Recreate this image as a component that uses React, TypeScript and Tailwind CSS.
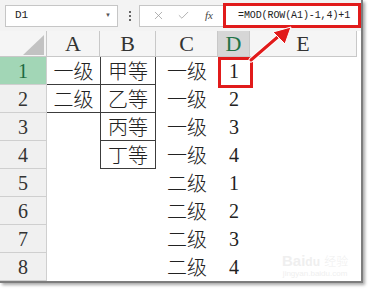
import { X, Check } from 'lucide-react';

type Row = { a?: string; b?: string; c: string; d: string };

const rows: Row[] = [
  { a: '一级', b: '甲等', c: '一级', d: '1' },
  { a: '二级', b: '乙等', c: '一级', d: '2' },
  { b: '丙等', c: '一级', d: '3' },
  { b: '丁等', c: '一级', d: '4' },
  { c: '二级', d: '1' },
  { c: '二级', d: '2' },
  { c: '二级', d: '3' },
  { c: '二级', d: '4' },
];

const serif = "font-['Liberation_Serif','Noto_Sans_CJK_SC',serif]";
const cjk = "font-['Noto_Sans_CJK_SC',sans-serif] font-light";

export default function App() {
  return (
    <div className="relative h-[289px] w-[375px] overflow-hidden bg-white">
      <div className="w-[363px] border-r-2 border-b-2 border-[#7d7d7d] shadow-[2px_2px_3px_rgba(0,0,0,0.35)]">
        {/* Formula bar */}
        <div className="flex h-[31px] items-center bg-[#f3f3f3] pl-[5px]">
          <div className="flex h-[22px] w-[113px] items-center justify-between border border-[#c6c6c6] bg-white pl-[9px] pr-[6px]">
            <span className="font-['Liberation_Mono',monospace] text-[11px] text-[#222]">D1</span>
            <span className="text-[6px] text-[#555]">▼</span>
          </div>
          <div className="ml-[11px] flex flex-col gap-[2px]">
            <span className="h-[2px] w-[2px] bg-[#666]" />
            <span className="h-[2px] w-[2px] bg-[#666]" />
            <span className="h-[2px] w-[2px] bg-[#666]" />
          </div>
          <div className="ml-[8px] flex h-[22px] w-[84px] items-center border border-r-0 border-[#c6c6c6] bg-white pl-[12px]">
            <X size={13} strokeWidth={1.4} color="#9a9a9a" />
            <Check size={13} strokeWidth={1.4} color="#9a9a9a" className="ml-[12px]" />
            <span className="ml-[15px] font-['Liberation_Serif',serif] text-[11px] italic text-[#444]">fx</span>
          </div>
          <div className="flex h-[25px] flex-1 items-center border-[3px] border-[#e11b1b] bg-white pl-[12px]">
            <span className="font-['Liberation_Mono',monospace] text-[10px] tracking-[-0.1px] text-[#222]">
              =MOD(ROW(A1)-1,4)+1
            </span>
          </div>
        </div>

        {/* Sheet */}
        <div className="grid grid-cols-[47px_53px_56px_62px_32px_107px]">
          {/* Column headers */}
          <div className="relative h-[26px] border-r border-b border-[#c8c8c8] bg-[#f5f5f5]">
            <svg className="absolute right-[2px] bottom-[1px]" width="21" height="20" viewBox="0 0 21 20">
              <polygon points="21,0 21,20 0,20" fill="#c2c2c2" />
            </svg>
          </div>
          {['A', 'B', 'C', 'D', 'E'].map((l) => (
            <div
              key={l}
              className={`flex h-[26px] items-center justify-center border-r border-b border-[#c8c8c8] ${serif} text-[22px] ${
                l === 'D' ? 'bg-[#d6d6d6] text-[#217346]' : 'bg-[#f5f5f5] text-[#333]'
              }`}
            >
              {l}
            </div>
          ))}

          {rows.map((r, i) => (
            <div key={i} className="contents">
              <div
                className={`flex h-[28px] items-center justify-center border-r border-b border-[#cfcfcf] ${serif} text-[20px] ${
                  i === 0 ? 'bg-[#a2d6b6] text-[#1d6b40]' : 'bg-[#f0f0f0] text-[#333]'
                }`}
              >
                {i + 1}
              </div>
              <div
                className={`flex h-[28px] items-center justify-center ${cjk} text-[20px] text-[#222] ${
                  i < 2 ? 'border-b border-[#3c3c3c]' : ''
                }`}
              >
                {r.a}
              </div>
              <div
                className={`flex h-[28px] items-center justify-center ${cjk} text-[20px] text-[#222] ${
                  i < 4 ? 'border-x border-b border-[#3c3c3c]' : ''
                }`}
              >
                {r.b}
              </div>
              <div className={`flex h-[28px] items-center justify-center ${cjk} text-[20px] text-[#222]`}>{r.c}</div>
              <div className={`flex h-[28px] items-center justify-center ${serif} text-[20px] text-[#222]`}>{r.d}</div>
              <div className="h-[28px]" />
            </div>
          ))}
        </div>
      </div>

      {/* Annotation: red box on D1 and arrow to the formula */}
      <div className="absolute top-[57px] left-[218px] h-[31px] w-[35px] border-[3px] border-[#e11b1b]" />
      <svg className="absolute top-0 left-0" width="375" height="289" viewBox="0 0 375 289">
        <line x1="251" y1="60" x2="280" y2="35" stroke="#ffffff" strokeWidth="5" strokeLinecap="round" />
        <line x1="251" y1="60" x2="280" y2="35" stroke="#e11b1b" strokeWidth="3" strokeLinecap="round" />
        <polygon points="291,27 285,44 273,32" fill="#e11b1b" stroke="#ffffff" strokeWidth="1" />
      </svg>

      {/* Watermark */}
      <div className="absolute top-[253px] left-[282px] flex flex-col items-center leading-none text-[#efefef]">
        <span className="font-['Liberation_Sans',sans-serif] text-[15px] font-bold">
          Bai<span className="text-[12px]">du</span> <span className={`${cjk} text-[12px]`}>经验</span>
        </span>
        <span className="mt-[2px] font-['Liberation_Sans',sans-serif] text-[8px]">jingyan.baidu.com</span>
      </div>
    </div>
  );
}
